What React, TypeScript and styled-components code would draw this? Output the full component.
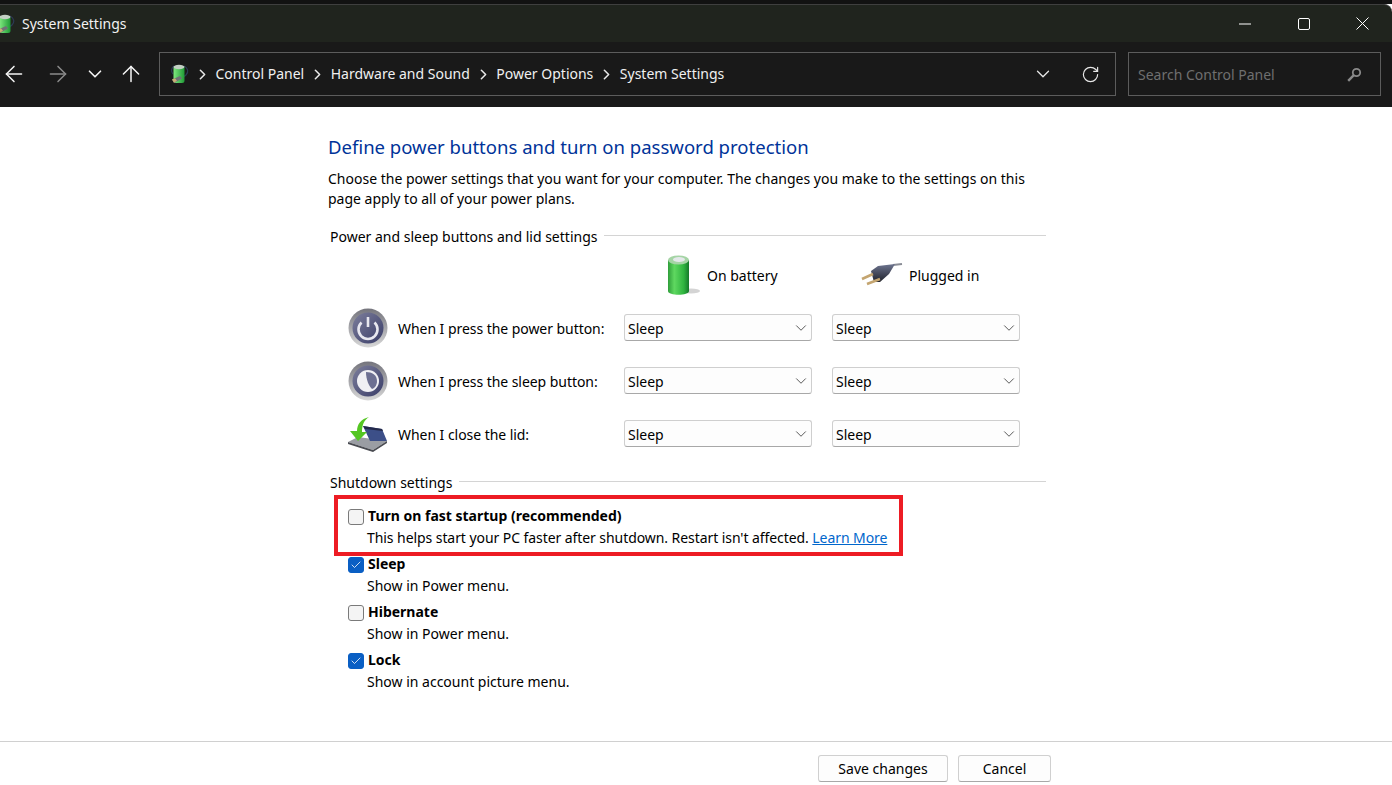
import React from "react";
import styled, { createGlobalStyle } from "styled-components";
import { ArrowLeft, ArrowRight, ArrowUp, ChevronDown, ChevronRight, Check, RotateCw } from "lucide-react";

const GlobalStyle = createGlobalStyle`
  html, body {
    margin: 0;
    padding: 0;
    height: 100%;
    overflow: hidden;
    background: #fff;
  }
  * { box-sizing: border-box; }
  body {
    font-family: "Noto Sans", "Open Sans", sans-serif;
    font-size: 14px;
    color: #000;
  }
`;

const AppContainer = styled.div`
  display: flex;
  flex-direction: column;
  width: 1392px;
  height: 785px;
  overflow: hidden;
`;

/* Title bar */
const TitleStrip = styled.div`
  height: 4px;
  background: #121212;
`;

const TitleBar = styled.header`
  display: flex;
  align-items: center;
  justify-content: space-between;
  height: 38px;
  overflow: hidden;
  background: #20241e;
  border-top: 1px solid #3f3f3f;
  border-top-right-radius: 8px;
  color: #f2f2f2;
`;

const TitleLeft = styled.div`
  display: flex;
  align-items: center;
  gap: 7px;
  margin-left: -5px;
  font-size: 14px;
`;

const WindowControls = styled.div`
  display: flex;
  align-items: center;
`;

const WindowButton = styled.div`
  display: flex;
  align-items: center;
  justify-content: center;
  width: 59px;
  height: 37px;
  color: #fff;
`;

/* Toolbar */
const Toolbar = styled.div`
  display: flex;
  align-items: center;
  height: 65px;
  padding: 0 11px 1px 0;
  background: #191919;
`;

const NavGroup = styled.div`
  display: flex;
  align-items: center;
  width: 159px;
  flex-shrink: 0;
`;

const NavButton = styled.div<{ $w: number; $dim?: boolean }>`
  display: flex;
  align-items: center;
  justify-content: center;
  width: ${({ $w }) => $w}px;
  color: ${({ $dim }) => ($dim ? "#8a8a8a" : "#f4f4f4")};

  svg {
    flex-shrink: 0;
  }
`;

const AddressBox = styled.div`
  display: flex;
  align-items: center;
  flex: 1;
  height: 44px;
  padding: 0 15px 0 9px;
  border: 1px solid #5c5c5c;
  color: #f0f0f0;
`;

const Crumb = styled.span`
  margin-top: -2px;
  font-size: 14px;
  white-space: nowrap;
`;

const CrumbSep = styled.span`
  display: flex;
  width: 26.5px;
  align-items: center;
  justify-content: center;
  color: #e8e8e8;
`;

const AddressEnd = styled.div`
  display: flex;
  align-items: center;
  gap: 27px;
  margin-left: auto;
  color: #e8e8e8;
`;

const SearchBox = styled.div`
  display: flex;
  align-items: center;
  justify-content: space-between;
  width: 253px;
  height: 44px;
  margin-left: 12px;
  padding: 0 18px 0 9px;
  border: 1px solid #5c5c5c;
  color: #6f6f6f;
  font-size: 14px;
`;

/* Main */
const Main = styled.main`
  display: flex;
  flex-direction: column;
  flex: 1;
  padding: 26px 346px 0 328px;
`;

const PageTitle = styled.h1`
  margin: 0;
  font-size: 18.55px;
  font-weight: 400;
  line-height: 28px;
  white-space: nowrap;
  color: #003399;
`;

const Description = styled.p`
  margin: 8px 0 0;
  line-height: 20px;
  font-size: 14px;
`;

const SectionHeader = styled.div<{ $top: number }>`
  display: flex;
  align-items: center;
  gap: 7px;
  margin-top: ${({ $top }) => $top}px;
  padding-left: 2px;
  height: 20px;
  white-space: nowrap;
`;

const SectionLine = styled.div`
  flex: 1;
  height: 1px;
  margin-top: -2px;
  background: #d4d4d4;
`;

const HeaderRow = styled.div`
  display: grid;
  grid-template-columns: 188px 20px 188px;
  margin: 3px 0 0 296px;
  height: 52px;
`;

const ColumnHead = styled.div<{ $pad: number; $gap: number }>`
  display: flex;
  align-items: center;
  gap: ${({ $gap }) => $gap}px;
  padding-left: ${({ $pad }) => $pad}px;
`;

const SettingRow = styled.div`
  display: grid;
  grid-template-columns: 50px 226px 188px 20px 188px;
  align-items: center;
  height: 53px;
  margin-left: 20px;
`;

const RowIcon = styled.div`
  display: flex;
  align-items: center;
`;

const RowLabel = styled.div`
  padding-top: 2px;
  white-space: nowrap;
  letter-spacing: -0.05px;
`;

const Select = styled.div`
  display: flex;
  align-items: center;
  justify-content: space-between;
  height: 27px;
  padding: 0 1px 0 3px;
  line-height: 27px;
  background: #fdfdfd;
  border: 1px solid #cfcfcf;
  border-bottom-color: #a8a8a8;
  border-radius: 3px;
`;

const SelectValue = styled.span`
  padding-top: 1px;
`;

const SelectChevron = styled(ChevronDown)`
  color: #555;
`;

const RedBox = styled.div`
  width: 569px;
  height: 61px;
  margin: 3px 0 -4px 6px;
  padding: 5px 0 0 10px;
  border: 4px solid #ed1c24;
`;

const Option = styled.div<{ $boxed?: boolean }>`
  display: flex;
  flex-direction: column;
  height: 48px;
  margin-left: ${({ $boxed }) => ($boxed ? 0 : 20)}px;
`;

const OptionHead = styled.div`
  display: flex;
  align-items: center;
  gap: 4px;
  height: 22px;
  font-weight: 700;
`;

const OptionBody = styled.div<{ $tight?: boolean }>`
  height: 24px;
  line-height: 24px;
  margin-left: 19px;
  white-space: nowrap;
  letter-spacing: ${({ $tight }) => ($tight ? "-0.07px" : "0")};
`;

const CheckBox = styled.div<{ $on?: boolean }>`
  display: flex;
  align-items: center;
  justify-content: center;
  width: 16px;
  height: 16px;
  margin-top: 4px;
  border-radius: 3px;
  color: #fff;
  background: ${({ $on }) => ($on ? "#0a5fc4" : "#f4f4f4")};
  border: 1px solid ${({ $on }) => ($on ? "#0a5fc4" : "#7a7a7a")};
`;

const LearnMore = styled.a`
  color: #0066cc;
  text-decoration: underline;
`;

const Footer = styled.footer`
  display: flex;
  justify-content: flex-end;
  gap: 10px;
  height: 44px;
  padding: 13px 341px 0 0;
  border-top: 1px solid #d0d0d0;
`;

const Button = styled.button<{ $w: number }>`
  width: ${({ $w }) => $w}px;
  height: 27px;
  padding: 0;
  font: inherit;
  color: #000;
  background: #fdfdfd;
  border: 1px solid #d0d0d0;
  border-bottom-color: #a8a8a8;
  border-radius: 3px;
`;

/* Drawn icons */
const BatteryAppIcon = () => (
  <svg width="20" height="20" viewBox="0 0 20 20">
    <defs>
      <linearGradient id="appBat" x1="0" x2="1" y1="0" y2="0">
        <stop offset="0" stopColor="#7fe87f" />
        <stop offset="1" stopColor="#1f9a36" />
      </linearGradient>
    </defs>
    <path d="M5 2C2 4 2 8 4 10M15 2c4 2 5 6 2 9-1 1-3 2-4 2" stroke="#2c3a55" strokeWidth="1.2" fill="none" />
    <rect x="4.5" y="2" width="11" height="17" rx="2.5" fill="url(#appBat)" />
    <ellipse cx="10" cy="3" rx="5.5" ry="2.2" fill="#c3d0c3" />
    <path d="M3 15.5l8-3.5 2 2.5-8 4.5z" fill="#6f7276" />
    <path d="M3 15.5l3-1.3 2 2.5-3 2z" fill="#c9ae74" />
  </svg>
);

const BatteryIcon = () => (
  <svg width="34" height="42" viewBox="0 0 34 42">
    <defs>
      <linearGradient id="batBody" x1="0" x2="1" y1="0" y2="0">
        <stop offset="0" stopColor="#2f9e3a" />
        <stop offset="0.3" stopColor="#5fd860" />
        <stop offset="0.75" stopColor="#2fb43f" />
        <stop offset="1" stopColor="#15792a" />
      </linearGradient>
    </defs>
    <ellipse cx="25" cy="37" rx="9" ry="2.5" fill="#d4d4d4" />
    <path d="M2 6h21v31c0 5-21 5-21 0z" fill="url(#batBody)" />
    <ellipse cx="12.5" cy="6" rx="10.5" ry="4.5" fill="#a5d4a5" />
    <ellipse cx="13" cy="5.5" rx="6" ry="2.6" fill="#e4e8ea" />
  </svg>
);

const PlugIcon = () => (
  <svg width="44" height="28" viewBox="0 0 44 28">
    <defs>
      <linearGradient id="plugBody" x1="0" x2="0" y1="0" y2="1">
        <stop offset="0" stopColor="#6e7590" />
        <stop offset="1" stopColor="#20222c" />
      </linearGradient>
    </defs>
    <path d="M33 4L42 3" stroke="#8a8d96" strokeWidth="2" />
    <path d="M11 10L18 5 35 3 29 13 20 21H14z" fill="url(#plugBody)" />
    <path d="M2 18l11-5M7 23l13-5" stroke="#c4a570" strokeWidth="2.6" />
  </svg>
);

const PowerIcon = () => (
  <svg width="40" height="40" viewBox="0 0 40 40">
    <defs>
      <linearGradient id="ringGrad" x1="0" x2="0" y1="0" y2="1">
        <stop offset="0" stopColor="#74747c" />
        <stop offset="1" stopColor="#d8d8d8" />
      </linearGradient>
      <linearGradient id="faceGrad" x1="0" x2="1" y1="0" y2="1">
        <stop offset="0" stopColor="#7d7f9c" />
        <stop offset="1" stopColor="#3a3d68" />
      </linearGradient>
    </defs>
    <circle cx="20" cy="20" r="19.5" fill="url(#ringGrad)" />
    <circle cx="20" cy="20" r="15.5" fill="url(#faceGrad)" />
    <path d="M13.5 14.5a9.5 9.5 0 1 0 13 0" stroke="#e8e8f0" strokeWidth="2.6" fill="none" />
    <path d="M20 9v10" stroke="#e8e8f0" strokeWidth="2.6" />
  </svg>
);

const SleepIcon = () => (
  <svg width="40" height="40" viewBox="0 0 40 40">
    <circle cx="20" cy="20" r="19.5" fill="url(#ringGrad)" />
    <circle cx="20" cy="20" r="15.5" fill="url(#faceGrad)" />
    <circle cx="20" cy="20" r="11" fill="#f0f0f4" />
    <path d="M18 11c6 0 11 3 11 9 0 4-2 7-5 8-3-3-6-9-6-17z" fill="#6d7092" />
  </svg>
);

const LidIcon = () => (
  <svg width="40" height="36" viewBox="0 0 40 36">
    <path d="M0 26l10-5 29 4-14 9z" fill="#9a9da3" />
    <path d="M0 26l25 8 14-9v2L25 36 0 28z" fill="#4a4c52" />
    <path d="M15 10l19 3 5 12H22z" fill="#3c4f88" />
    <path d="M15 10l19 3 1 2-18-2z" fill="#23294a" />
    <path d="M21 1C13 3 9 8 9 15H2l8 10 9-9h-5c0-7 2-12 7-15z" fill="#54c622" />
  </svg>
);

const MinimizeGlyph = () => (
  <svg width="12" height="12" viewBox="0 0 12 12">
    <path d="M0 6h12" stroke="#fff" strokeWidth="1" />
  </svg>
);

const MaximizeGlyph = () => (
  <svg width="12" height="12" viewBox="0 0 12 12">
    <rect x="0.5" y="0.5" width="11" height="11" rx="1.5" stroke="#fff" fill="none" />
  </svg>
);

const CloseGlyph = () => (
  <svg width="13" height="13" viewBox="0 0 13 13">
    <path d="M0.5 0.5l12 12M12.5 0.5l-12 12" stroke="#fff" strokeWidth="1" />
  </svg>
);

const SearchGlyph = () => (
  <svg width="15" height="15" viewBox="0 0 15 15">
    <circle cx="9.5" cy="5.5" r="3.7" stroke="#8a8a8a" strokeWidth="1.8" fill="none" />
    <path d="M6.8 8.2L1.2 13.8" stroke="#8a8a8a" strokeWidth="2.4" />
  </svg>
);

const rows = [
  { label: "When I press the power button:", icon: <PowerIcon /> },
  { label: "When I press the sleep button:", icon: <SleepIcon /> },
  { label: "When I close the lid:", icon: <LidIcon /> },
];

const crumbs = ["Control Panel", "Hardware and Sound", "Power Options", "System Settings"];

const DropDown = () => (
  <Select>
    <SelectValue>Sleep</SelectValue>
    <SelectChevron size={18} strokeWidth={1.3} />
  </Select>
);

export default function App() {
  return (
    <AppContainer>
      <GlobalStyle />
      <TitleStrip />
      <TitleBar>
        <TitleLeft>
          <BatteryAppIcon />
          System Settings
        </TitleLeft>
        <WindowControls>
          <WindowButton><MinimizeGlyph /></WindowButton>
          <WindowButton><MaximizeGlyph /></WindowButton>
          <WindowButton><CloseGlyph /></WindowButton>
        </WindowControls>
      </TitleBar>
      <Toolbar>
        <NavGroup>
          <NavButton $w={28}><ArrowLeft size={26} strokeWidth={1.4} /></NavButton>
          <NavButton $w={60} $dim><ArrowRight size={26} strokeWidth={1.4} /></NavButton>
          <NavButton $w={16}><ChevronDown size={22} strokeWidth={1.8} /></NavButton>
          <NavButton $w={56}><ArrowUp size={26} strokeWidth={1.4} /></NavButton>
        </NavGroup>
        <AddressBox>
          <BatteryAppIcon />
          {crumbs.map((c) => (
            <React.Fragment key={c}>
              <CrumbSep><ChevronRight size={17} strokeWidth={2.2} /></CrumbSep>
              <Crumb>{c}</Crumb>
            </React.Fragment>
          ))}
          <AddressEnd>
            <ChevronDown size={22} strokeWidth={1.4} />
            <RotateCw size={19} strokeWidth={1.5} />
          </AddressEnd>
        </AddressBox>
        <SearchBox>
          Search Control Panel
          <SearchGlyph />
        </SearchBox>
      </Toolbar>
      <Main>
        <PageTitle>Define power buttons and turn on password protection</PageTitle>
        <Description>
          Choose the power settings that you want for your computer. The changes you make to the settings on this
          <br />
          page apply to all of your power plans.
        </Description>
        <SectionHeader $top={17}>
          Power and sleep buttons and lid settings
          <SectionLine />
        </SectionHeader>
        <HeaderRow>
          <ColumnHead $pad={42} $gap={7}><BatteryIcon />On battery</ColumnHead>
          <span />
          <ColumnHead $pad={28} $gap={5}><PlugIcon />Plugged in</ColumnHead>
        </HeaderRow>
        {rows.map((r) => (
          <SettingRow key={r.label}>
            <RowIcon>{r.icon}</RowIcon>
            <RowLabel>{r.label}</RowLabel>
            <DropDown />
            <span />
            <DropDown />
          </SettingRow>
        ))}
        <SectionHeader $top={12}>
          Shutdown settings
          <SectionLine />
        </SectionHeader>
        <RedBox>
          <Option $boxed>
            <OptionHead><CheckBox />Turn on fast startup (recommended)</OptionHead>
            <OptionBody $tight>
              This helps start your PC faster after shutdown. Restart isn't affected. <LearnMore href="#">Learn More</LearnMore>
            </OptionBody>
          </Option>
        </RedBox>
        <Option>
          <OptionHead><CheckBox $on><Check size={12} strokeWidth={1.6} /></CheckBox>Sleep</OptionHead>
          <OptionBody>Show in Power menu.</OptionBody>
        </Option>
        <Option>
          <OptionHead><CheckBox />Hibernate</OptionHead>
          <OptionBody>Show in Power menu.</OptionBody>
        </Option>
        <Option>
          <OptionHead><CheckBox $on><Check size={12} strokeWidth={1.6} /></CheckBox>Lock</OptionHead>
          <OptionBody>Show in account picture menu.</OptionBody>
        </Option>
      </Main>
      <Footer>
        <Button $w={130}>Save changes</Button>
        <Button $w={93}>Cancel</Button>
      </Footer>
    </AppContainer>
  );
}
